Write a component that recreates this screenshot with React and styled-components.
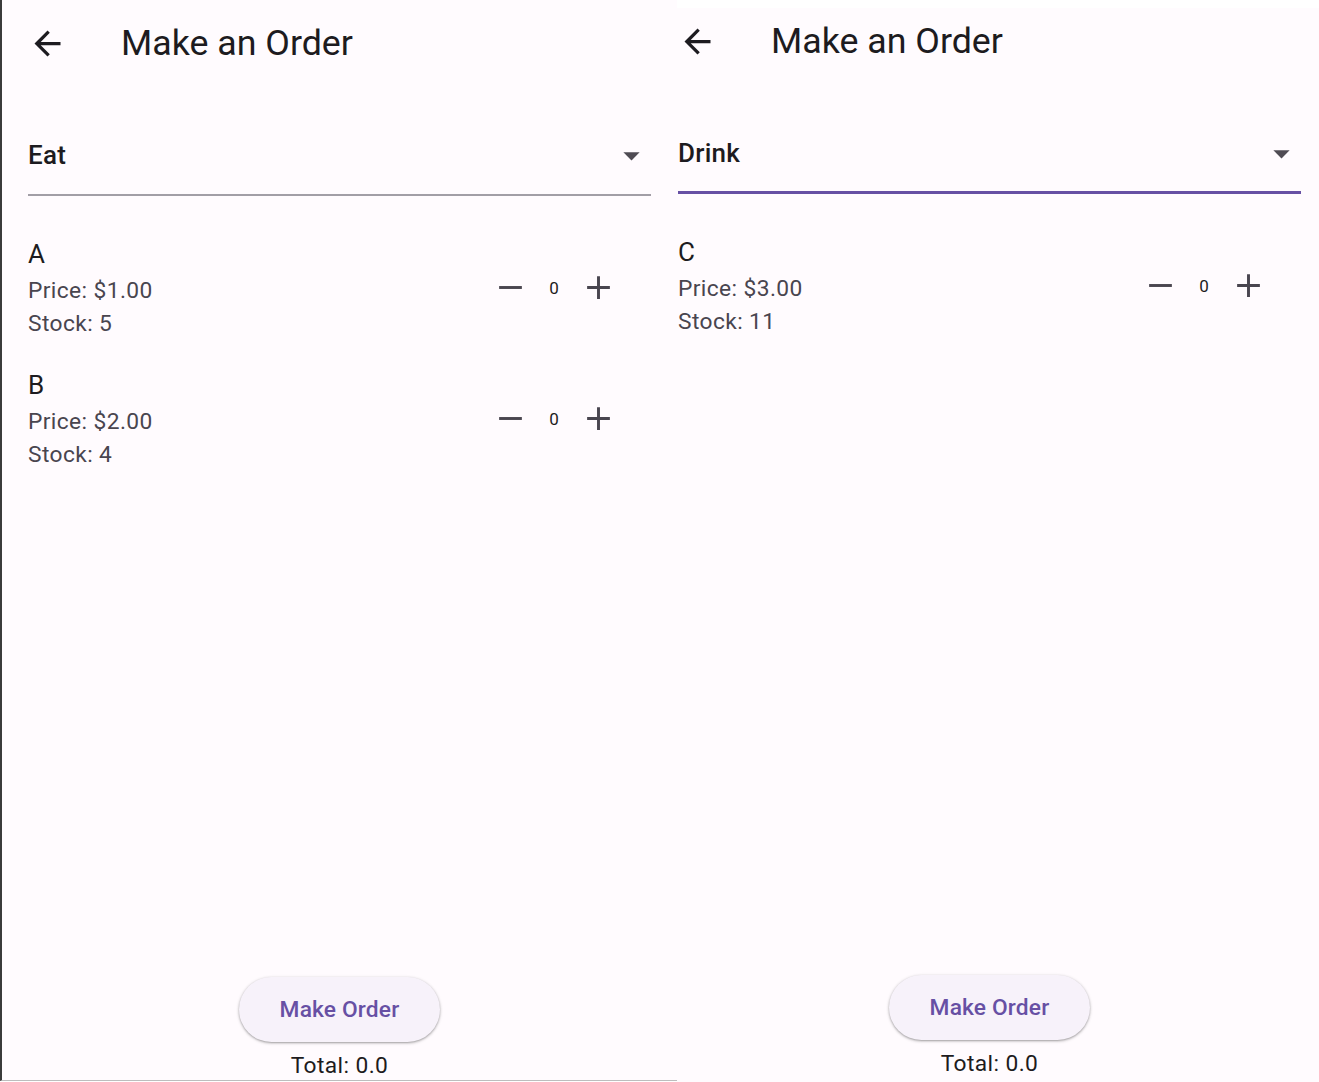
import React from "react";
import styled, { createGlobalStyle } from "styled-components";

const GlobalStyle = createGlobalStyle`
  html, body {
    margin: 0;
    padding: 0;
    background: #ffffff;
  }
  body {
    font-family: Roboto, "Noto Sans", sans-serif;
  }
`;

const Page = styled.div`
  display: flex;
  align-items: flex-start;
  width: 1319px;
  height: 1082px;
  overflow: hidden;
`;

const Screen = styled.div`
  flex: none;
  width: 675px;
  height: 1080px;
  display: flex;
  flex-direction: column;
  background: #fffbfe;
  color: #1d1b20;
`;

const FrontScreen = styled(Screen)`
  border-left: 2px solid #3b3b3b;
  border-bottom: 1px solid #bdbdbd;
`;

// the second phone shot is cropped: its left and top edges are cut off
const BackView = styled.div`
  flex: 1;
  height: 1082px;
  box-sizing: border-box;
  border-top: 8px solid #ffffff;
  background: #fffbfe;
  overflow: hidden;

  ${Screen} {
    margin: -10px 0 0 -25px;
  }
`;

const Header = styled.div`
  display: flex;
  align-items: center;
  height: 87px;
  flex: none;
`;

const BackButton = styled.button`
  width: 91px;
  height: 87px;
  display: flex;
  align-items: center;
  justify-content: center;
  padding: 0;
  border: 0;
  background: none;
`;

const Title = styled.h1`
  margin: 0 0 0 28px;
  font-size: 35.75px;
  font-weight: 400;
  line-height: 45px;
  color: #1d1b20;
`;

const Field = styled.div`
  display: flex;
  align-items: center;
  justify-content: space-between;
  margin: 0 26px;
  padding: 49px 0 ${(p) => (p.$focused ? 18 : 19)}px;
  border-bottom: ${(p) => (p.$focused ? "3px solid #6750a4" : "2px solid #a29ea6")};
`;

const FieldValue = styled.span`
  font-size: 26px;
  font-weight: 500;
  line-height: 39px;
  letter-spacing: 0.24px;
  color: #1d1b20;
`;

const List = styled.div`
  padding: 26px 26px 0;
`;

const Item = styled.div`
  display: flex;
  align-items: center;
  justify-content: space-between;
  padding: 13px 0;
`;

const Info = styled.div`
  display: flex;
  flex-direction: column;
`;

const Name = styled.span`
  font-size: 26px;
  line-height: 39px;
  letter-spacing: 0.8px;
  color: #1d1b20;
`;

const Detail = styled.span`
  font-size: 22.75px;
  line-height: 33px;
  letter-spacing: 0.4px;
  color: #49454f;
`;

const Controls = styled.div`
  display: flex;
  align-items: center;
  margin-right: 14px;
`;

const IconButton = styled.button`
  width: 78px;
  height: 78px;
  display: flex;
  align-items: center;
  justify-content: center;
  padding: 0;
  border: 0;
  background: none;
`;

const Count = styled.span`
  min-width: 10px;
  text-align: center;
  font-size: 17px;
  color: #1d1b20;
`;

const Spacer = styled.div`
  flex: 1;
`;

const Footer = styled.div`
  display: flex;
  flex-direction: column;
  align-items: center;
  gap: 8px;
`;

const OrderButton = styled.button`
  height: 65px;
  padding: 0 41px;
  border: 0;
  border-radius: 33px;
  background: #f7f2fa;
  color: #6750a4;
  font-family: Roboto, sans-serif;
  font-size: 22.75px;
  font-weight: 500;
  letter-spacing: 0.16px;
  box-shadow: 0 1px 2px rgba(0, 0, 0, 0.28), 0 1px 3px 1px rgba(0, 0, 0, 0.1);
`;

const Total = styled.div`
  padding-top: 1px;
  font-size: 22.75px;
  line-height: 29px;
  letter-spacing: 0.4px;
  color: #1d1b20;
`;

const Icon = ({ d, color = "#49454f" }) => (
  <svg width="39" height="39" viewBox="0 0 24 24">
    <path d={d} fill={color} />
  </svg>
);

const ARROW_BACK = "M20 11H7.83l5.59-5.59L12 4l-8 8 8 8 1.41-1.41L7.83 13H20v-2z";
const DROP_DOWN = "M7 10l5 5 5-5z";
const MINUS = "M19 12.9H5v-1.8h14v1.8z";
const PLUS = "M19 12.9h-6.1V19h-1.8v-6.1H5v-1.8h6.1V5h1.8v6.1H19v1.8z";

const screens = [
  {
    category: "Eat",
    focused: false,
    items: [
      { name: "A", price: 1, stock: 5 },
      { name: "B", price: 2, stock: 4 },
    ],
  },
  {
    category: "Drink",
    focused: true,
    items: [{ name: "C", price: 3, stock: 11 }],
  },
];

const OrderScreen = ({ as: Frame = Screen, data }) => (
  <Frame>
    <Header>
      <BackButton>
        <Icon d={ARROW_BACK} color="#1d1b20" />
      </BackButton>
      <Title>Make an Order</Title>
    </Header>
    <Field $focused={data.focused}>
      <FieldValue>{data.category}</FieldValue>
      <Icon d={DROP_DOWN} color="#4f4b53" />
    </Field>
    <List>
      {data.items.map((item) => (
        <Item key={item.name}>
          <Info>
            <Name>{item.name}</Name>
            <Detail>Price: ${item.price.toFixed(2)}</Detail>
            <Detail>Stock: {item.stock}</Detail>
          </Info>
          <Controls>
            <IconButton>
              <Icon d={MINUS} />
            </IconButton>
            <Count>0</Count>
            <IconButton>
              <Icon d={PLUS} />
            </IconButton>
          </Controls>
        </Item>
      ))}
    </List>
    <Spacer />
    <Footer>
      <OrderButton>Make Order</OrderButton>
      <Total>Total: 0.0</Total>
    </Footer>
  </Frame>
);

export default function App() {
  return (
    <>
      <GlobalStyle />
      <Page>
        <OrderScreen as={FrontScreen} data={screens[0]} />
        <BackView>
          <OrderScreen data={screens[1]} />
        </BackView>
      </Page>
    </>
  );
}
